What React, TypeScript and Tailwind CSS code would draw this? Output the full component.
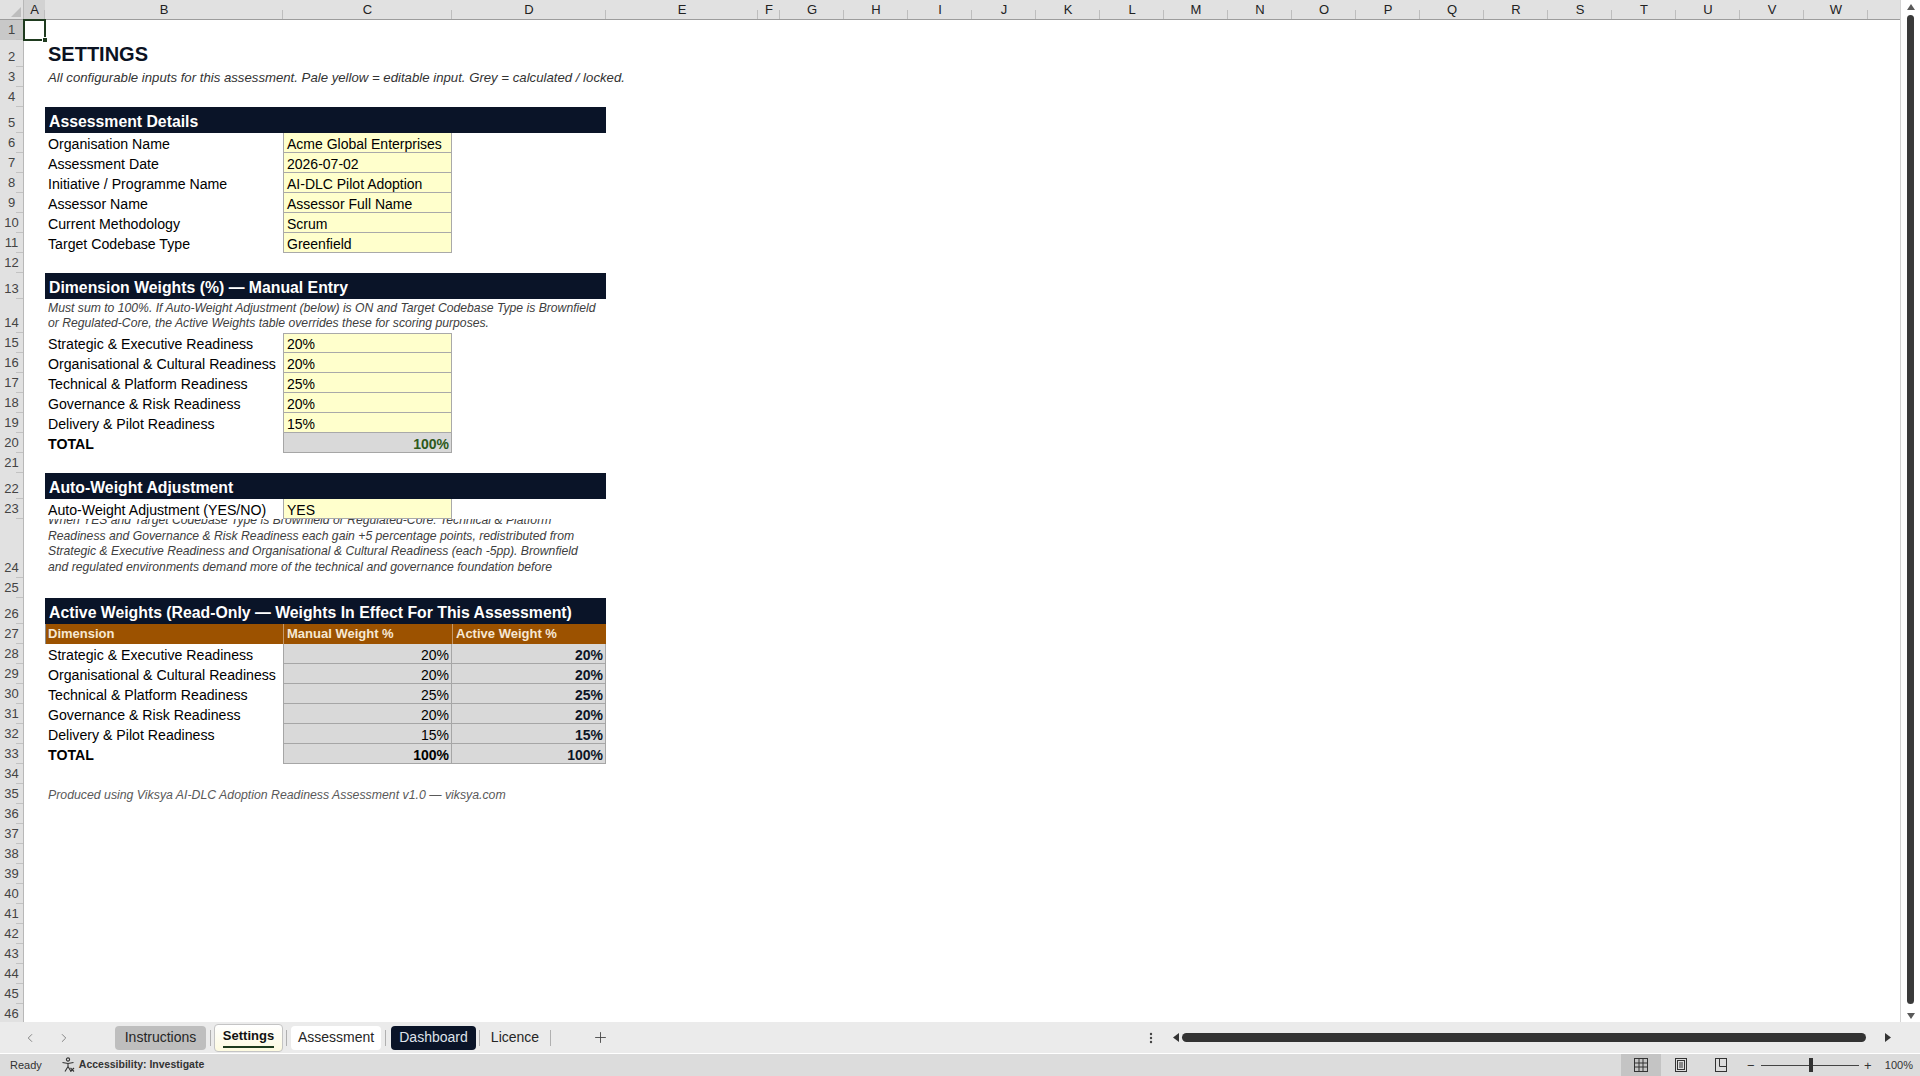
import type { ReactNode } from "react";
import { ChevronLeft, ChevronRight, Plus } from "lucide-react";

const COLS: [string, string][] = [
  ["A", "w-[21px]"],
  ["B", "w-[238px]"],
  ["C", "w-[169px]"],
  ["D", "w-[154px]"],
  ["E", "w-[152px]"],
  ["F", "w-[22px]"],
  ...["G", "H", "I", "J", "K", "L", "M", "N", "O", "P", "Q", "R", "S", "T", "U", "V", "W"].map(
    (l) => [l, "w-[64px]"] as [string, string]
  ),
  ["", "w-[64px]"],
];

const NARROW = "font-['Liberation_Sans_Narrow','Liberation_Sans',Arial,sans-serif]";

function Row({ n, h = "h-[20px]", children }: { n: number; h?: string; children?: ReactNode }) {
  const sel = n === 1;
  return (
    <div className={`flex shrink-0 ${h}`}>
      <div
        className={`relative flex w-[24px] shrink-0 items-end justify-center border-r border-[#b8b8b8] pb-[2px] text-[13px] leading-[16px] text-[#444] after:absolute after:bottom-0 after:right-0 after:h-px after:w-[7px] after:bg-[#c2c2c2] ${NARROW} ${
          sel ? "bg-[#c8c8c8]" : "bg-[#e1e1e1]"
        }`}
      >
        {n}
      </div>
      <div className="w-[21px] shrink-0" />
      {children}
    </div>
  );
}

function Label({ children, bold }: { children: ReactNode; bold?: boolean }) {
  return (
    <div
      className={`flex w-[238px] shrink-0 items-end whitespace-nowrap pb-[1px] pl-[3px] text-[14.15px] leading-[16px] text-black ${
        bold ? "font-bold" : ""
      }`}
    >
      {children}
    </div>
  );
}

function Input({ children, top }: { children: ReactNode; top?: boolean }) {
  return (
    <div
      className={`flex w-[169px] shrink-0 items-end whitespace-nowrap border-x border-b border-[#a9a9a9] bg-[#ffffcc] pl-[3px] text-[14px] leading-[16px] text-black ${
        top ? "border-t" : ""
      }`}
    >
      {children}
    </div>
  );
}

function Grey({ children, bold, first, color = "text-black" }: { children: ReactNode; bold?: boolean; first?: boolean; color?: string }) {
  return (
    <div
      className={`flex shrink-0 items-end justify-end border-b border-r border-[#a6a6a6] bg-[#d9d9d9] pr-[2px] text-[14px] leading-[16px] ${color} ${
        first ? "w-[169px] border-l" : "w-[154px]"
      } ${bold ? "font-bold" : ""}`}
    >
      {children}
    </div>
  );
}

function Bar({ children }: { children: ReactNode }) {
  return (
    <div className="flex w-[561px] shrink-0 items-end whitespace-nowrap bg-[#0a1428] pb-[2px] pl-[4px] text-[15.8px] font-bold leading-[18px] text-white">
      {children}
    </div>
  );
}

const DIMS: [string, string, string][] = [
  ["Strategic & Executive Readiness", "20%", "20%"],
  ["Organisational & Cultural Readiness", "20%", "20%"],
  ["Technical & Platform Readiness", "25%", "25%"],
  ["Governance & Risk Readiness", "20%", "20%"],
  ["Delivery & Pilot Readiness", "15%", "15%"],
];

const DETAILS: [string, string][] = [
  ["Organisation Name", "Acme Global Enterprises"],
  ["Assessment Date", "2026-07-02"],
  ["Initiative / Programme Name", "AI-DLC Pilot Adoption"],
  ["Assessor Name", "Assessor Full Name"],
  ["Current Methodology", "Scrum"],
  ["Target Codebase Type", "Greenfield"],
];

function Sheet() {
  return (
    <div className="relative flex w-[1900px] shrink-0 flex-col overflow-hidden">
      {/* column headers */}
      <div className="flex h-[20px] shrink-0 border-b border-[#9c9c9c] bg-[#e1e1e1]">
        <div className="flex w-[24px] shrink-0 items-end justify-end border-r border-[#b8b8b8] p-[2px]">
          <svg width="10" height="10" viewBox="0 0 10 10">
            <polygon points="10,0 10,10 0,10" fill="#bdbdbd" />
          </svg>
        </div>
        {COLS.map(([l, w], i) => (
          <div
            key={i}
            className={`relative flex shrink-0 items-center justify-center text-[13px] text-[#222] after:absolute after:bottom-0 after:right-0 after:h-[9px] after:w-px after:bg-[#bdbdbd] ${NARROW} ${w} ${
              l === "A" ? "bg-[#d2d2d2]" : ""
            }`}
          >
            {l}
          </div>
        ))}
      </div>

      <Row n={1} />
      <Row n={2} h="h-[27px]">
        <div className="flex items-end whitespace-nowrap pb-[2px] pl-[3px] text-[20px] font-bold leading-[22px] text-[#0b1222]">SETTINGS</div>
      </Row>
      <Row n={3}>
        <div className="flex items-end whitespace-nowrap pb-[1px] pl-[3px] text-[13.2px] italic leading-[16px] text-[#333]">
          All configurable inputs for this assessment. Pale yellow = editable input. Grey = calculated / locked.
        </div>
      </Row>
      <Row n={4} />
      <Row n={5} h="h-[26px]">
        <Bar>Assessment Details</Bar>
      </Row>
      {DETAILS.map(([k, v], i) => (
        <Row key={k} n={6 + i}>
          <Label>{k}</Label>
          <Input>{v}</Input>
        </Row>
      ))}
      <Row n={12} />
      <Row n={13} h="h-[26px]">
        <Bar>Dimension Weights (%) — Manual Entry</Bar>
      </Row>
      <Row n={14} h="h-[34px]">
        <div className="flex w-[561px] shrink-0 flex-col justify-center whitespace-nowrap pl-[3px] text-[12.2px] italic leading-[15px] text-[#404040]">
          <div>Must sum to 100%. If Auto-Weight Adjustment (below) is ON and Target Codebase Type is Brownfield</div>
          <div>or Regulated-Core, the Active Weights table overrides these for scoring purposes.</div>
        </div>
      </Row>
      {DIMS.map(([k, v], i) => (
        <Row key={k} n={15 + i}>
          <Label>{k}</Label>
          <Input top={i === 0}>{v}</Input>
        </Row>
      ))}
      <Row n={20}>
        <Label bold>TOTAL</Label>
        <Grey first bold color="text-[#2e5a1c]">
          100%
        </Grey>
      </Row>
      <Row n={21} />
      <Row n={22} h="h-[26px]">
        <Bar>Auto-Weight Adjustment</Bar>
      </Row>
      <Row n={23}>
        <Label>Auto-Weight Adjustment (YES/NO)</Label>
        <Input>YES</Input>
      </Row>
      <Row n={24} h="h-[59px]">
        <div className="w-[561px] shrink-0 overflow-hidden whitespace-nowrap pl-[3px] text-[12.2px] italic leading-[15.7px] text-[#404040]">
          <div className="mt-[-6px]">
            <div>When YES and Target Codebase Type is Brownfield or Regulated-Core: Technical &amp; Platform</div>
            <div>Readiness and Governance &amp; Risk Readiness each gain +5 percentage points, redistributed from</div>
            <div>Strategic &amp; Executive Readiness and Organisational &amp; Cultural Readiness (each -5pp). Brownfield</div>
            <div>and regulated environments demand more of the technical and governance foundation before</div>
          </div>
        </div>
      </Row>
      <Row n={25} />
      <Row n={26} h="h-[26px]">
        <Bar>Active Weights (Read-Only — Weights In Effect For This Assessment)</Bar>
      </Row>
      <Row n={27}>
        <div className="flex w-[238px] shrink-0 items-end border-l border-[#8c8c8c] bg-[#9c5200] pb-[2px] pl-[2px] text-[13px] font-bold leading-[16px] text-[#f7e8d3]">
          Dimension
        </div>
        <div className="flex w-[169px] shrink-0 items-end border-l border-[#c59868] bg-[#9c5200] pb-[2px] pl-[3px] text-[13px] font-bold leading-[16px] text-[#f7e8d3]">
          Manual Weight %
        </div>
        <div className="flex w-[154px] shrink-0 items-end border-l border-[#c59868] bg-[#9c5200] pb-[2px] pl-[3px] text-[13px] font-bold leading-[16px] text-[#f7e8d3]">
          Active Weight %
        </div>
      </Row>
      {DIMS.map(([k, m, a], i) => (
        <Row key={k} n={28 + i}>
          <Label>{k}</Label>
          <Grey first>{m}</Grey>
          <Grey bold color="text-[#0d1526]">
            {a}
          </Grey>
        </Row>
      ))}
      <Row n={33}>
        <Label bold>TOTAL</Label>
        <Grey first bold>
          100%
        </Grey>
        <Grey bold color="text-[#0d1526]">
          100%
        </Grey>
      </Row>
      <Row n={34} />
      <Row n={35}>
        <div className="flex items-end whitespace-nowrap pb-[1px] pl-[3px] text-[12.3px] italic leading-[16px] text-[#595959]">
          Produced using Viksya AI-DLC Adoption Readiness Assessment v1.0 — viksya.com
        </div>
      </Row>
      {Array.from({ length: 11 }, (_, i) => (
        <Row key={i} n={36 + i} />
      ))}

      {/* active cell A1 */}
      <div className="absolute left-[23px] top-[19px] h-[22px] w-[23px] border-2 border-[#1f3b1f]" />
      <div className="absolute left-[42px] top-[37px] h-[6px] w-[6px] border border-white bg-[#1f3b1f]" />
    </div>
  );
}

function VScroll() {
  return (
    <div className="flex w-[20px] shrink-0 flex-col items-center border-l border-[#d4d4d4] bg-white">
      <svg className="mt-[4px] shrink-0" width="8" height="6" viewBox="0 0 8 6">
        <polygon points="4,0 8,6 0,6" fill="#5a5a5a" />
      </svg>
      <div className="mt-[5px] h-[989px] w-[7px] shrink-0 rounded-full bg-[#3a3a3a]" />
      <svg className="mt-[9px] shrink-0" width="8" height="6" viewBox="0 0 8 6">
        <polygon points="0,0 8,0 4,6" fill="#5a5a5a" />
      </svg>
    </div>
  );
}

function Sep() {
  return <div className="h-[16px] w-px shrink-0 bg-[#b0b0b0]" />;
}

function TabBar() {
  return (
    <div className="flex h-[31px] shrink-0 items-center bg-[#ebebeb] text-[14px] text-[#262626]">
      <ChevronLeft className="ml-[23px] shrink-0" size={14} strokeWidth={1.5} color="#777" />
      <ChevronRight className="ml-[20px] shrink-0" size={14} strokeWidth={1.5} color="#777" />
      <div className="ml-[44px] flex h-[24px] w-[91px] shrink-0 items-center justify-center rounded-[4px] bg-[#bebebe]">Instructions</div>
      <div className="ml-[4px]">
        <Sep />
      </div>
      <div className="ml-[3px] flex h-[28px] w-[69px] shrink-0 flex-col items-center rounded-[4px] border border-[#c4c4c4] bg-gradient-to-b from-white to-[#fdfae0] pt-[2px]">
        <div className="text-[13px] font-bold leading-[18px] text-[#111]">Settings</div>
        <div className="mt-[1px] h-[2px] w-[51px] bg-[#1d3a1d]" />
      </div>
      <div className="ml-[3px]">
        <Sep />
      </div>
      <div className="ml-[4px] flex h-[24px] w-[90px] shrink-0 items-center justify-center rounded-[4px] bg-white">Assessment</div>
      <div className="ml-[4px]">
        <Sep />
      </div>
      <div className="ml-[5px] flex h-[24px] w-[85px] shrink-0 items-center justify-center rounded-[4px] bg-[#0a1428] text-[#dfe3ea]">Dashboard</div>
      <div className="ml-[3px]">
        <Sep />
      </div>
      <div className="ml-[3px] flex h-[24px] w-[64px] shrink-0 items-center justify-center">Licence</div>
      <div className="ml-[3px]">
        <Sep />
      </div>
      <Plus className="ml-[41px] shrink-0" size={17} strokeWidth={1.25} color="#444" />
      <svg className="ml-[540px] shrink-0" width="4" height="12" viewBox="0 0 4 12">
        <circle cx="2" cy="2" r="1.2" fill="#444" />
        <circle cx="2" cy="6" r="1.2" fill="#444" />
        <circle cx="2" cy="10" r="1.2" fill="#444" />
      </svg>
      <svg className="ml-[20px] shrink-0" width="6" height="9" viewBox="0 0 6 9">
        <polygon points="6,0 6,9 0,4.5" fill="#333" />
      </svg>
      <div className="ml-[3px] h-[9px] w-[684px] shrink-0 rounded-full bg-[#333]" />
      <svg className="ml-[19px] shrink-0" width="6" height="9" viewBox="0 0 6 9">
        <polygon points="0,0 0,9 6,4.5" fill="#333" />
      </svg>
    </div>
  );
}

function StatusBar() {
  return (
    <div className="flex h-[22px] shrink-0 items-center bg-[#dcdcdc] text-[11px] text-[#333]">
      <span className="ml-[10px]">Ready</span>
      <svg className="ml-[18px] shrink-0" width="16" height="16" viewBox="0 0 16 16" fill="none" stroke="#333" strokeWidth="1.1">
        <circle cx="8" cy="2.5" r="1.6" />
        <path d="M2.5 5.5 L8 6.5 L13.5 5.5" />
        <path d="M8 6.5 L8 9.5" />
        <path d="M8 9.5 L5 14.5 M8 9.5 L11 14.5" />
        <path d="M10.5 11 L14 14.5 M14 11 L10.5 14.5" />
      </svg>
      <span className="ml-[3px] text-[10.5px] font-bold">Accessibility: Investigate</span>

      <div className="ml-auto flex h-full items-center pr-[7px]">
        <div className="flex h-full w-[40px] items-center justify-center bg-[#c4c4c4]">
          <svg width="14" height="14" viewBox="0 0 14 14" fill="none" stroke="#333" strokeWidth="1">
            <rect x="0.5" y="0.5" width="13" height="13" />
            <path d="M5 0.5 V13.5 M9 0.5 V13.5 M0.5 5 H13.5 M0.5 9 H13.5" />
          </svg>
        </div>
        <div className="flex h-full w-[40px] items-center justify-center">
          <svg width="12" height="14" viewBox="0 0 12 14" fill="none" stroke="#333" strokeWidth="1">
            <rect x="0.5" y="0.5" width="11" height="13" />
            <rect x="2.5" y="2.5" width="7" height="9" />
            <path d="M4 5 H8 M4 7 H8 M4 9 H8" />
          </svg>
        </div>
        <div className="flex h-full w-[40px] items-center justify-center">
          <svg width="12" height="14" viewBox="0 0 12 14" fill="none" stroke="#333" strokeWidth="1">
            <rect x="0.5" y="0.5" width="11" height="13" />
            <path d="M4.5 0.5 V8.5 H11.5" />
          </svg>
        </div>
        <span className="ml-[4px] w-[12px] text-center text-[13px] leading-none">−</span>
        <div className="ml-[4px] flex h-[14px] w-[98px] items-center">
          <div className="h-px w-[48px] bg-[#444]" />
          <div className="h-[14px] w-[4px] bg-[#333]" />
          <div className="h-px w-[46px] bg-[#444]" />
        </div>
        <span className="ml-[3px] w-[12px] text-center text-[13px] leading-none">+</span>
        <span className="ml-[11px]">100%</span>
      </div>
    </div>
  );
}

export default function App() {
  return (
    <div className="flex h-[1076px] w-[1920px] flex-col overflow-hidden bg-white font-['Liberation_Sans',Arial,sans-serif]">
      <div className="flex h-[1022px] shrink-0">
        <Sheet />
        <VScroll />
      </div>
      <TabBar />
      <div className="h-px shrink-0 bg-white" />
      <StatusBar />
    </div>
  );
}
